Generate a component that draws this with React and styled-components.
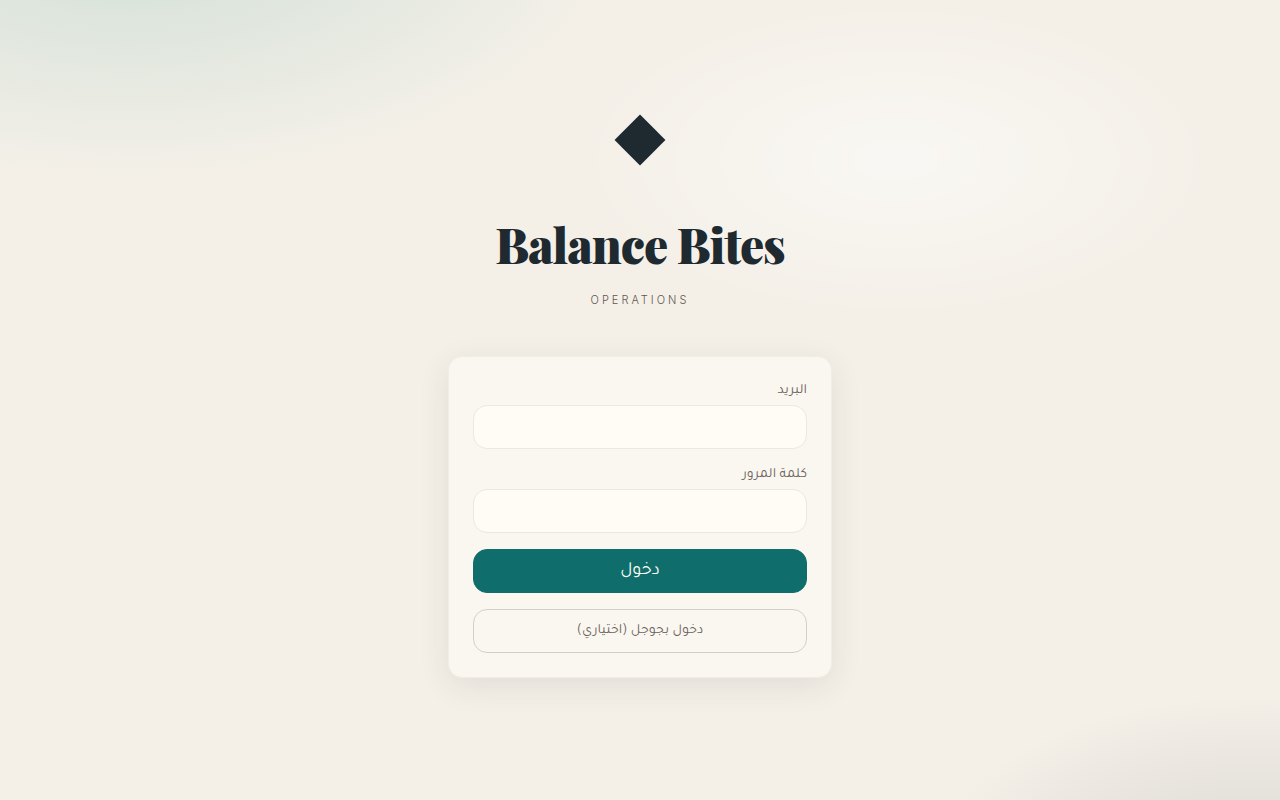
import React from "react";
import styled, { createGlobalStyle } from "styled-components";

const GlobalStyle = createGlobalStyle`
  *, *::before, *::after { box-sizing: border-box; }
  body {
    margin: 0;
    background: #f4f0e8;
    font-family: "Tajawal", "DejaVu Sans", sans-serif;
  }
`;

const Page = styled.main`
  min-height: 100vh;
  padding: 24px;
  display: flex;
  flex-direction: column;
  align-items: center;
  justify-content: center;
  background:
    radial-gradient(500px 260px at 10% -10%, #d0dfd6, rgba(208, 223, 214, 0)),
    radial-gradient(320px 160px at 70% 20%, rgba(255, 255, 255, 0.5), rgba(255, 255, 255, 0)),
    radial-gradient(330px 184px at 98% 110%, #d9d5d1, rgba(217, 213, 209, 0)),
    #f4f0e8;
`;

const Diamond = styled.div`
  width: 36px;
  height: 36px;
  background: #1f2a30;
  transform: rotate(45deg);
`;

const Title = styled.h1`
  margin: 48px 0 10px;
  font-family: "Playfair Display", "Liberation Serif", serif;
  font-size: 48px;
  font-weight: 900;
  line-height: 76px;
  letter-spacing: -1px;
  color: #1f2a30;
`;

const Subtitle = styled.p`
  margin: 0 0 48px;
  font-family: Inter, sans-serif;
  font-size: 11px;
  font-weight: 300;
  line-height: 16px;
  letter-spacing: 3px;
  color: #5f5750;
`;

const Card = styled.form`
  width: 100%;
  max-width: 384px;
  padding: 24px;
  display: flex;
  flex-direction: column;
  gap: 16px;
  border: 1px solid #f0ede7;
  border-radius: 14px;
  background: #faf7f0;
  box-shadow: 0 8px 32px rgba(31, 42, 48, 0.09);
`;

const Field = styled.div`
  display: flex;
  flex-direction: column;
  gap: 4px;
`;

const Label = styled.label`
  font-size: 14px;
  line-height: 20px;
  color: #6b625c;
`;

const Input = styled.input`
  width: 100%;
  height: 44px;
  padding: 0 16px;
  border: 1px solid #ebe8e2;
  border-radius: 14px;
  background: #fffcf6;
  color: #1f2a30;
  font: inherit;
  font-size: 14px;
`;

const Button = styled.button`
  height: 44px;
  padding: 0 16px;
  border: 1px solid ${(p) => (p.$primary ? "#0f6e6b" : "#d5cfc9")};
  border-radius: 14px;
  background: ${(p) => (p.$primary ? "#0f6e6b" : "transparent")};
  color: ${(p) => (p.$primary ? "#fffcf6" : "#6b625c")};
  font-family: inherit;
  font-size: ${(p) => (p.$primary ? 18 : 14)}px;
  cursor: pointer;
`;

export default function App() {
  return (
    <>
      <GlobalStyle />
      <Page>
        <Diamond aria-hidden="true" />
        <Title>Balance Bites</Title>
        <Subtitle>OPERATIONS</Subtitle>
        <Card dir="rtl" lang="ar" onSubmit={(e) => e.preventDefault()}>
          <Field>
            <Label htmlFor="email">البريد</Label>
            <Input id="email" type="email" dir="ltr" />
          </Field>
          <Field>
            <Label htmlFor="password">كلمة المرور</Label>
            <Input id="password" type="password" dir="ltr" />
          </Field>
          <Button type="submit" $primary>دخول</Button>
          <Button type="button">دخول بجوجل (اختياري)</Button>
        </Card>
      </Page>
    </>
  );
}
